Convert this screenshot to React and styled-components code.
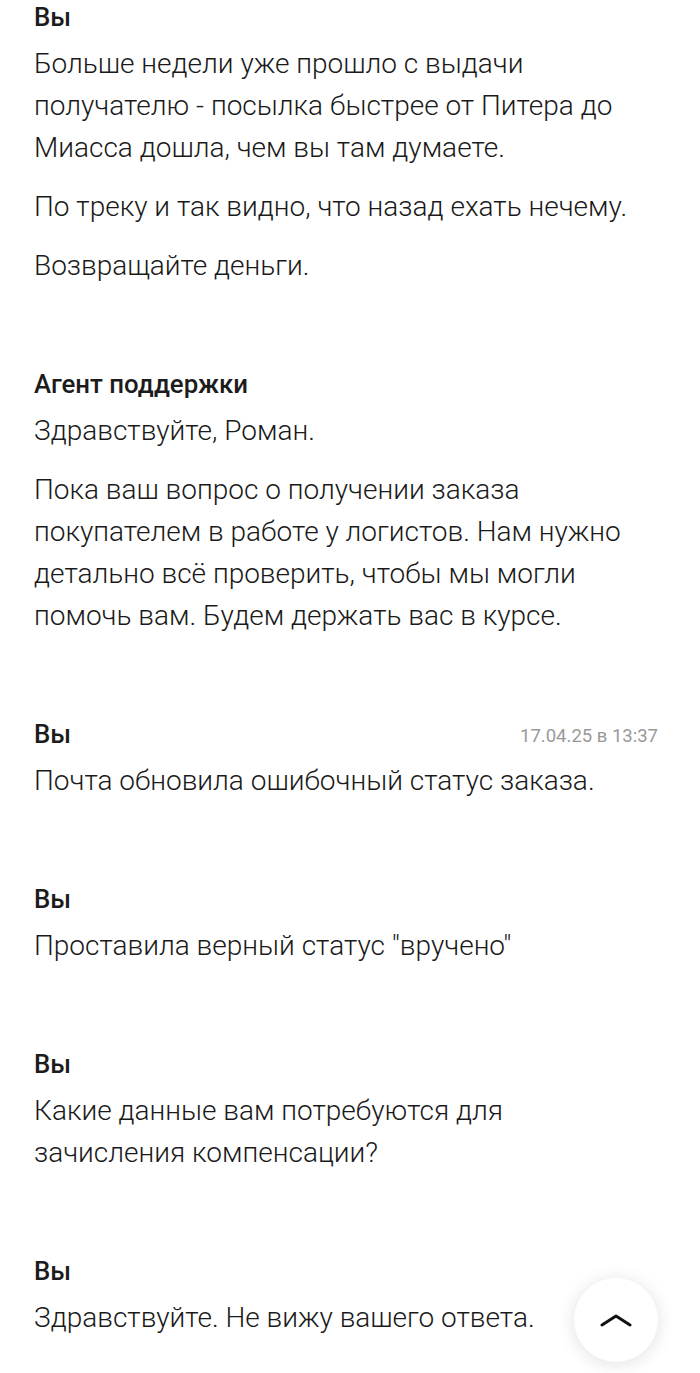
import React from "react";
import styled, { createGlobalStyle } from "styled-components";

const Global = createGlobalStyle`
  html, body { margin: 0; padding: 0; background: #fff; }
  body { font-family: Roboto, "Noto Sans", Arial, sans-serif; color: #1f1f1f; }
`;

const Page = styled.div`
  display: flex;
  flex-direction: column;
  gap: 81px;
  padding: 1px 42px 40px 34px;
`;

const Message = styled.section`
  display: flex;
  flex-direction: column;
  gap: 10px;
`;

const Header = styled.div`
  display: flex;
  justify-content: space-between;
  align-items: center;
  height: 32px;
`;

const Author = styled.div`
  font-size: 25.8px;
  font-weight: 500;
  line-height: 32px;
  color: #1c1c1c;
`;

const Time = styled.div`
  font-size: 18.5px;
  font-weight: 400;
  color: #999;
  line-height: 32px;
  padding-top: 4px;
`;

const Body = styled.div`
  display: flex;
  flex-direction: column;
  gap: 17px;
`;

const Para = styled.p`
  margin: 0;
  font-size: 28px;
  font-weight: 300;
  line-height: 42px;
  color: #1a1a1a;
`;

const UpButton = styled.button`
  position: fixed;
  right: 42px;
  bottom: 11px;
  width: 84px;
  height: 84px;
  border-radius: 50%;
  border: none;
  background: #fff;
  box-shadow: 0 2px 18px rgba(0, 0, 0, 0.12);
  display: flex;
  align-items: center;
  justify-content: center;
  padding: 0;
  cursor: pointer;
`;

const messages = [
  {
    author: "Вы",
    paras: [
      "Больше недели уже прошло с выдачи получателю - посылка быстрее от Питера до Миасса дошла, чем вы там думаете.",
      "По треку и так видно, что назад ехать нечему.",
      "Возвращайте деньги.",
    ],
  },
  {
    author: "Агент поддержки",
    paras: [
      "Здравствуйте, Роман.",
      "Пока ваш вопрос о получении заказа покупателем в работе у логистов. Нам нужно детально всё проверить, чтобы мы могли помочь вам. Будем держать вас в курсе.",
    ],
  },
  { author: "Вы", time: "17.04.25 в 13:37", paras: ["Почта обновила ошибочный статус заказа."] },
  { author: "Вы", paras: ["Проставила верный статус \"вручено\""] },
  { author: "Вы", paras: ["Какие данные вам потребуются для зачисления компенсации?"] },
  { author: "Вы", paras: ["Здравствуйте. Не вижу вашего ответа."] },
];

export default function App() {
  return (
    <>
      <Global />
      <Page>
        {messages.map((m, i) => (
          <Message key={i}>
            <Header>
              <Author>{m.author}</Author>
              {m.time && <Time>{m.time}</Time>}
            </Header>
            <Body>
              {m.paras.map((p, j) => (
                <Para key={j}>{p}</Para>
              ))}
            </Body>
          </Message>
        ))}
      </Page>
      <UpButton aria-label="Наверх">
        <svg width="32" height="14" viewBox="0 0 32 14" fill="none">
          <path d="M2 12 L16 3 L30 12" stroke="#111" strokeWidth="3" strokeLinecap="round" strokeLinejoin="round" />
        </svg>
      </UpButton>
    </>
  );
}
